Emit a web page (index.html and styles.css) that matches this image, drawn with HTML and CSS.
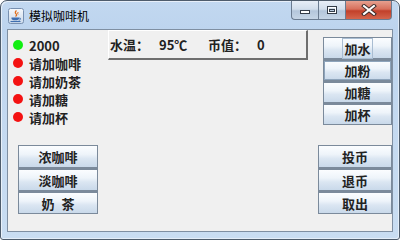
FILE: index.html
```html
<!DOCTYPE html>
<html lang="zh-CN">
<head>
<meta charset="utf-8">
<title>模拟咖啡机</title>
<link rel="stylesheet" href="styles.css">
</head>
<body>
<div class="window">
  <div class="titlebar">
    <svg class="app-icon" width="16" height="16" viewBox="0 0 16 16">
      <defs>
        <linearGradient id="ig" x1="0" y1="0" x2="0" y2="1">
          <stop offset="0" stop-color="#f6f9fc"/>
          <stop offset="1" stop-color="#c9d8ea"/>
        </linearGradient>
      </defs>
      <rect x="0.5" y="0.5" width="15" height="15" rx="2" fill="url(#ig)" stroke="#7890b0"/>
      <path d="M8.5 2.5 q-2.2 1.8 -0.3 3.6 q1.2 1.1 -0.8 2.3" fill="none" stroke="#e0701e" stroke-width="1.3"/>
      <path d="M10.2 4 q-1.2 1.2 0 2.4" fill="none" stroke="#e0701e" stroke-width="1"/>
      <path d="M3.5 9.5 h7.5 v0.8 q0 2 -3.75 2 q-3.75 0 -3.75 -2z" fill="#3f6fb0"/>
      <path d="M11 10 q2 0 1.5 1.3 q-0.4 0.8 -1.8 0.8" fill="none" stroke="#3f6fb0" stroke-width="0.9"/>
      <path d="M2.5 13.5 h10" stroke="#3f6fb0" stroke-width="1.1"/>
    </svg>
    <span class="title">模拟咖啡机</span>
    <div class="caption">
      <div class="cap-btn cap-min">
        <svg width="12" height="10" viewBox="0 0 12 10"><rect x="1.5" y="5.5" width="9" height="3" fill="#fff" stroke="#333c48"/></svg>
      </div>
      <div class="cap-btn cap-max">
        <svg width="12" height="10" viewBox="0 0 12 10"><rect x="1.5" y="1.5" width="9" height="7" fill="none" stroke="#333c48" stroke-width="1"/><rect x="2.5" y="2.5" width="7" height="5" fill="none" stroke="#fff" stroke-width="1"/><rect x="3.5" y="4.5" width="5" height="2" fill="none" stroke="#333c48" stroke-width="1"/></svg>
      </div>
      <div class="cap-btn cap-close">
        <svg width="16" height="12" viewBox="0 0 16 12"><path d="M3 2 L13 10 M13 2 L3 10" stroke="#3a2a28" stroke-width="4" stroke-linecap="square"/><path d="M3 2 L13 10 M13 2 L3 10" stroke="#fff" stroke-width="2" stroke-linecap="square"/></svg>
      </div>
    </div>
  </div>
  <div class="client">
    <div class="top-row">
      <div class="lights">
        <div class="light"><span class="dot green"></span><span>2000</span></div>
        <div class="light"><span class="dot red"></span><span>请加咖啡</span></div>
        <div class="light"><span class="dot red"></span><span>请加奶茶</span></div>
        <div class="light"><span class="dot red"></span><span>请加糖</span></div>
        <div class="light"><span class="dot red"></span><span>请加杯</span></div>
      </div>
      <div class="status">
        <span class="cell">水温：</span>
        <span class="cell">95℃</span>
        <span class="cell">币值：</span>
        <span class="cell">0</span>
      </div>
      <div class="stack top-stack">
        <div class="btn small focused"><span class="focus">加水</span></div>
        <div class="btn small hover">加粉</div>
        <div class="btn small">加糖</div>
        <div class="btn small">加杯</div>
      </div>
    </div>
    <div class="bottom-row">
      <div class="stack left-stack">
        <div class="btn">浓咖啡</div>
        <div class="btn">淡咖啡</div>
        <div class="btn spaced">奶 茶</div>
      </div>
      <div class="stack right-stack">
        <div class="btn">投币</div>
        <div class="btn">退币</div>
        <div class="btn">取出</div>
      </div>
    </div>
  </div>
</div>
</body>
</html>
```
FILE: styles.css
```css
* { box-sizing: border-box; }
html, body {
  margin: 0;
  padding: 0;
  background: #ffffff;
}
body {
  font-family: "Noto Sans CJK SC", "Noto Sans", sans-serif;
  color: #222;
}
.window {
  width: 400px;
  height: 240px;
  border: 1px solid #4e5c6c;
  border-radius: 7px 7px 3px 3px;
  background: linear-gradient(180deg, #c2d8f0 0px, #bdd4ee 28px, #c4d9f0 120px, #c9ddf2 240px);
  box-shadow: inset 1px 1px 0 rgba(255,255,255,0.6), inset -1px -1px 0 rgba(255,255,255,0.5);
  padding: 0 6px 7px 6px;
  display: flex;
  flex-direction: column;
}
.titlebar {
  height: 28px;
  display: flex;
  align-items: flex-start;
  flex-shrink: 0;
}
.app-icon {
  margin: 7px 0 0 1px;
  flex-shrink: 0;
}
.title {
  margin: 7px 0 0 5px;
  font-size: 12px;
  line-height: 16px;
  color: #000;
}
.caption {
  margin-left: auto;
  margin-right: 1px;
  display: flex;
  height: 19px;
}
.cap-btn {
  height: 19px;
  display: flex;
  align-items: center;
  justify-content: center;
  border: 1px solid #6a7b90;
  border-top: none;
}
.cap-min {
  width: 27px;
  border-radius: 0 0 0 4px;
  border-right: none;
  background: linear-gradient(180deg, #e7eef7 0%, #d2deec 45%, #b4c6db 55%, #c5d5e6 100%);
}
.cap-max {
  width: 27px;
  border-right: none;
  background: linear-gradient(180deg, #e7eef7 0%, #d2deec 45%, #b4c6db 55%, #c5d5e6 100%);
}
.cap-close {
  width: 47px;
  border-radius: 0 0 4px 0;
  background: linear-gradient(180deg, #e6a08f 0%, #d7705c 45%, #c2402a 55%, #d4654c 100%);
}
.client {
  flex: 1;
  border: 1px solid #7f8fa2;
  background: #f0f0f0;
  display: flex;
  flex-direction: column;
}
.top-row {
  display: flex;
  align-items: flex-start;
  height: 115px;
}
.lights {
  width: 100px;
  padding: 6px 0 0 5px;
  display: flex;
  flex-direction: column;
}
.light {
  height: 18px;
  display: flex;
  align-items: center;
  gap: 6px;
  font-size: 13px;
  font-weight: bold;
  color: #222;
}
.dot {
  width: 10px;
  height: 10px;
  border-radius: 50%;
  flex-shrink: 0;
}
.green { background: #12ee12; }
.red { background: #f41212; }
.status {
  width: 200px;
  height: 30px;
  display: flex;
  align-items: center;
  padding-left: 1px;
  border-top: 1px solid #ffffff;
  border-left: 1px solid #ffffff;
  border-right: 2px solid #6e6e6e;
  border-bottom: 2px solid #6e6e6e;
  background: #f0f0f0;
  font-size: 13px;
  font-weight: bold;
  color: #222;
}
.cell {
  width: 49px;
  flex-shrink: 0;
  white-space: nowrap;
}
.stack {
  display: flex;
  flex-direction: column;
}
.top-stack {
  width: 69px;
  margin: 7px 0 0 15px;
}
.bottom-row {
  display: flex;
  justify-content: space-between;
  padding-left: 10px;
}
.left-stack { width: 80px; }
.right-stack { width: 74px; }
.btn {
  height: 23px;
  display: flex;
  align-items: center;
  justify-content: center;
  border: 1px solid #7b8a9b;
  background: linear-gradient(180deg, #fbfdff 0%, #eef4fa 40%, #dbe6f2 60%, #c9d9ea 100%);
  font-size: 13px;
  font-weight: bold;
  color: #222;
  white-space: nowrap;
}
.btn + .btn { border-top-width: 2px; }
.btn.small { height: 22px; }
.btn.hover {
  box-shadow: inset 0 0 0 1px #8ea4bb;
}
.focus {
  padding: 0 1px;
  outline: 1px solid #a9bdd2;
  line-height: 19px;
}
.spaced { word-spacing: 4px; }
```
